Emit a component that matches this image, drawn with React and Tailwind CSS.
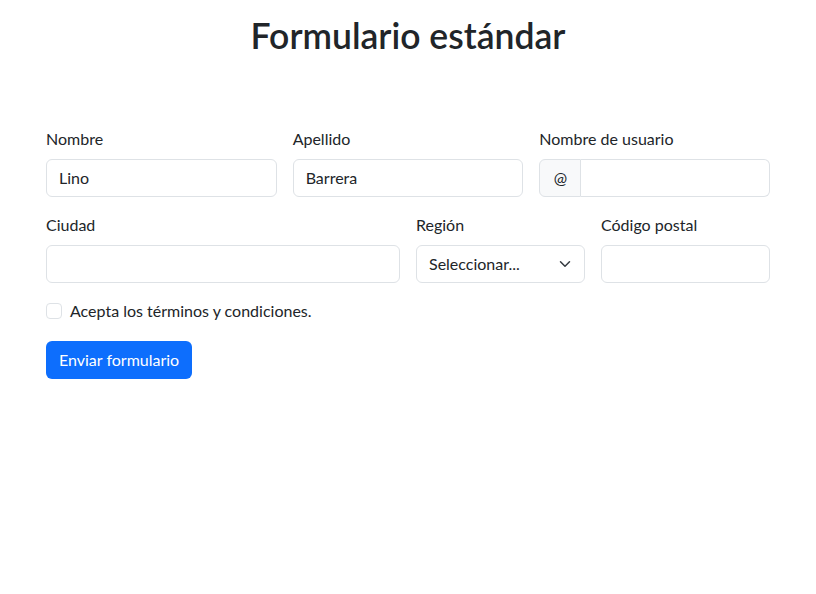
import React from "react";

export default function App() {
  return (
    <div className="min-h-[594px] bg-white text-[#212529] text-[16px] leading-6" style={{ fontFamily: "Lato, sans-serif" }}>
      <h1 className="text-center text-[35.5px] leading-[42px] font-semibold pt-[15px]">Formulario estándar</h1>
      <form className="w-[724px] ml-[46px] mt-[70px] flex flex-col">
        <div className="grid grid-cols-3 gap-x-4">
          <Field label="Nombre" value="Lino" />
          <Field label="Apellido" value="Barrera" />
          <div>
            <label className="block mb-2">Nombre de usuario</label>
            <div className="flex h-[38px]">
              <span className="flex items-center justify-center w-[42px] bg-[#f8f9fa] border border-[#dee2e6] rounded-l-[6px]">@</span>
              <input className="flex-1 min-w-0 border border-l-0 border-[#dee2e6] rounded-r-[6px] px-3 outline-none" />
            </div>
          </div>
        </div>
        <div className="grid grid-cols-[354px_169px_169px] gap-x-4 mt-4">
          <Field label="Ciudad" value="" />
          <div>
            <label className="block mb-2">Región</label>
            <div className="relative h-[38px] border border-[#dee2e6] rounded-[6px] flex items-center pl-3">
              <span>Seleccionar...</span>
              <svg className="absolute right-[13px] top-[12px]" width="12" height="12" viewBox="0 0 16 16" fill="none" stroke="#343a40" strokeWidth="2" strokeLinecap="round" strokeLinejoin="round">
                <path d="m2 5 6 6 6-6" />
              </svg>
            </div>
          </div>
          <Field label="Código postal" value="" />
        </div>
        <div className="flex items-start mt-4 min-h-[26px]">
          <span className="w-4 h-4 mt-1 border border-[#dee2e6] rounded-[4px] shrink-0" />
          <span className="ml-2">Acepta los términos y condiciones.</span>
        </div>
        <div className="mt-4">
          <button type="button" className="h-[38px] px-[13px] bg-[#0d6efd] text-white rounded-[6px]">Enviar formulario</button>
        </div>
      </form>
    </div>
  );
}

function Field({ label, value }) {
  return (
    <div>
      <label className="block mb-2">{label}</label>
      <div className="h-[38px] border border-[#dee2e6] rounded-[6px] flex items-center px-3">{value}</div>
    </div>
  );
}
